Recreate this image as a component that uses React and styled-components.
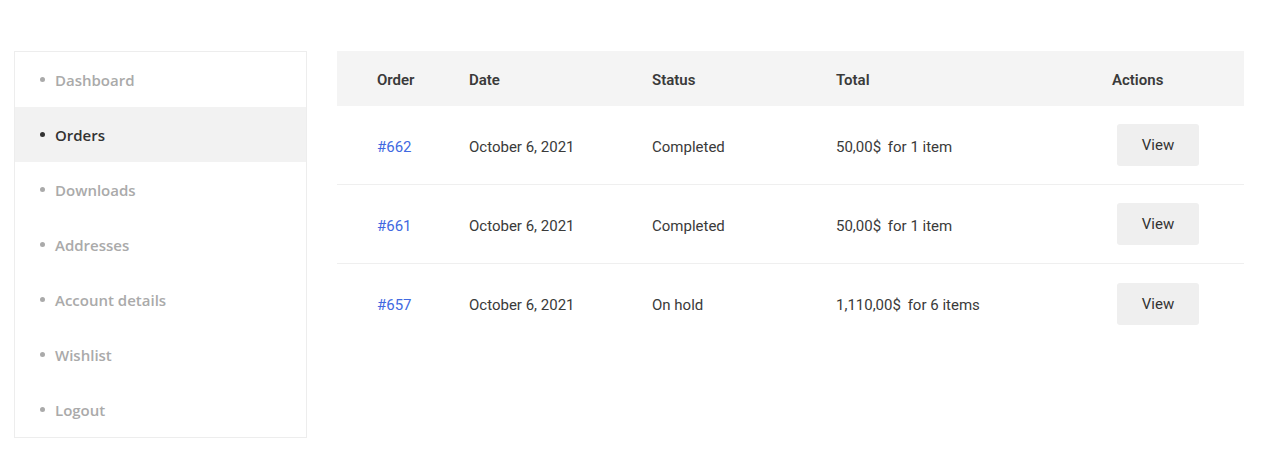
import { createGlobalStyle, styled } from "styled-components";

const Global = createGlobalStyle`
  body {
    margin: 0;
    background: #fff;
  }
`;

const Page = styled.div`
  display: flex;
  align-items: flex-start;
  gap: 30px;
  padding: 51px 23px 0 14px;
  width: 1267px;
  box-sizing: border-box;
`;

const Nav = styled.ul`
  list-style: none;
  margin: 0;
  padding: 0;
  width: 293px;
  flex: none;
  border: 1px solid #ededed;
  box-sizing: border-box;
`;

const NavItem = styled.li`
  display: flex;
  align-items: center;
  height: 55px;
  padding-left: 25px;
  font-family: "Open Sans", sans-serif;
  font-weight: 600;
  font-size: 15px;
  color: ${(p) => (p.$active ? "#333" : "#aaa")};
  background: ${(p) => (p.$active ? "#f2f2f2" : "transparent")};

  &::before {
    content: "";
    width: 5px;
    height: 5px;
    border-radius: 50%;
    background: currentColor;
    margin-right: 10px;
  }
`;

const Table = styled.div`
  flex: 1;
  font-family: Roboto, sans-serif;
  font-size: 15px;
  color: #3a3a3a;
`;

const Row = styled.div`
  display: grid;
  grid-template-columns: 132px 183px 184px 276px 1fr;
  align-items: center;
  height: ${(p) => (p.$head ? "55px" : "79px")};
  background: ${(p) => (p.$head ? "#f4f4f4" : "transparent")};
  font-weight: ${(p) => (p.$head ? 600 : 400)};
  border-bottom: ${(p) => (p.$last || p.$head ? "none" : "1px solid #efefef")};
  box-sizing: border-box;

  & > :first-child {
    padding-left: 40px;
  }
`;

const Cell = styled.div`
  padding-top: 3px;
`;

const Amount = styled.span`
  margin-right: 3px;
`;

const ButtonCell = styled.div``;

const OrderLink = styled.a`
  color: #4169e1;
  text-decoration: none;
`;

const ViewButton = styled.button`
  margin-left: 5px;
  width: 82px;
  height: 42px;
  border: none;
  border-radius: 3px;
  background: #efefef;
  font-family: Roboto, sans-serif;
  font-size: 15px;
  color: #333;
  cursor: pointer;
`;

const navItems = [
  "Dashboard",
  "Orders",
  "Downloads",
  "Addresses",
  "Account details",
  "Wishlist",
  "Logout",
];

const orders = [
  { id: "#662", date: "October 6, 2021", status: "Completed", total: "50,00$", items: "for 1 item" },
  { id: "#661", date: "October 6, 2021", status: "Completed", total: "50,00$", items: "for 1 item" },
  { id: "#657", date: "October 6, 2021", status: "On hold", total: "1,110,00$", items: "for 6 items" },
];

const App = () => {
  return (
    <>
      <Global />
      <Page>
        <Nav>
          {navItems.map((n) => (
            <NavItem key={n} $active={n === "Orders"}>{n}</NavItem>
          ))}
        </Nav>
        <Table>
          <Row $head>
            <Cell>Order</Cell>
            <Cell>Date</Cell>
            <Cell>Status</Cell>
            <Cell>Total</Cell>
            <Cell>Actions</Cell>
          </Row>
          {orders.map((o, i) => (
            <Row key={o.id} $last={i === orders.length - 1}>
              <Cell><OrderLink href="#">{o.id}</OrderLink></Cell>
              <Cell>{o.date}</Cell>
              <Cell>{o.status}</Cell>
              <Cell><Amount>{o.total}</Amount> {o.items}</Cell>
              <ButtonCell><ViewButton>View</ViewButton></ButtonCell>
            </Row>
          ))}
        </Table>
      </Page>
    </>
  );
};

export default App;
